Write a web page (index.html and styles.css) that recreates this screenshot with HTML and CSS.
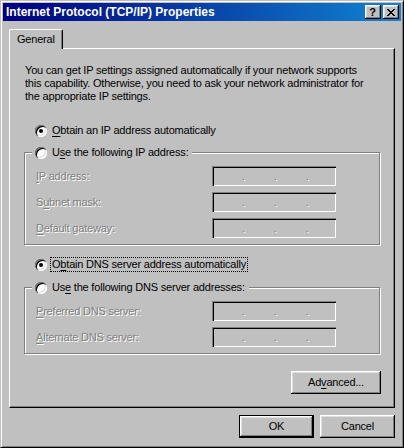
FILE: index.html
```html
<!DOCTYPE html>
<html lang="en">
<head>
    <meta charset="UTF-8">
    <title>Internet Protocol (TCP/IP) Properties</title>
    <link rel="stylesheet" href="styles.css">
</head>
<body>

<div class="window">
    <div class="titlebar">
        <span class="title">Internet Protocol (TCP/IP) Properties</span>
        <div class="caption-btns">
            <span class="cap-btn help">?</span>
            <span class="cap-btn close">
                <svg width="8" height="7" viewBox="0 0 8 7" shape-rendering="crispEdges">
                    <path d="M0 0h2v1H0z M6 0h2v1H6z M1 1h2v1H1z M5 1h2v1H5z M2 2h4v1H2z M3 3h2v1H3z M2 4h4v1H2z M1 5h2v1H1z M5 5h2v1H5z M0 6h2v1H0z M6 6h2v1H6z" fill="#000"/>
                </svg>
            </span>
        </div>
    </div>

    <div class="client">
        <div class="tabs">
            <div class="tab">General</div>
        </div>

        <div class="panel">
            <p class="intro">You can get IP settings assigned automatically if your network supports<br>this capability. Otherwise, you need to ask your network administrator for<br>the appropriate IP settings.</p>

            <div class="option">
                <span class="radio checked"></span>
                <span class="opt-label"><u>O</u>btain an IP address automatically</span>
            </div>

            <fieldset class="group">
                <legend>
                    <span class="radio"></span>
                    <span class="opt-label">U<u>s</u>e the following IP address:</span>
                </legend>
                <div class="fields">
                    <span class="disabled"><u>I</u>P address:</span>
                    <div class="ipbox"><span class="disabled">.</span><span class="disabled">.</span><span class="disabled">.</span></div>
                    <span class="disabled">S<u>u</u>bnet mask:</span>
                    <div class="ipbox"><span class="disabled">.</span><span class="disabled">.</span><span class="disabled">.</span></div>
                    <span class="disabled"><u>D</u>efault gateway:</span>
                    <div class="ipbox"><span class="disabled">.</span><span class="disabled">.</span><span class="disabled">.</span></div>
                </div>
            </fieldset>

            <div class="option option-dns">
                <span class="radio checked"></span>
                <span class="opt-label focused">O<u>b</u>tain DNS server address automatically</span>
            </div>

            <fieldset class="group">
                <legend>
                    <span class="radio"></span>
                    <span class="opt-label">Us<u>e</u> the following DNS server addresses:</span>
                </legend>
                <div class="fields">
                    <span class="disabled"><u>P</u>referred DNS server:</span>
                    <div class="ipbox"><span class="disabled">.</span><span class="disabled">.</span><span class="disabled">.</span></div>
                    <span class="disabled"><u>A</u>lternate DNS server:</span>
                    <div class="ipbox"><span class="disabled">.</span><span class="disabled">.</span><span class="disabled">.</span></div>
                </div>
            </fieldset>

            <div class="adv-row">
                <button class="btn btn-wide">Ad<u>v</u>anced...</button>
            </div>
        </div>

        <div class="dialog-btns">
            <button class="btn default">OK</button>
            <button class="btn">Cancel</button>
        </div>
    </div>
</div>

</body>
</html>
```

FILE: styles.css
```css
* {
    box-sizing: border-box;
}
body {
    margin: 0;
    background: #c0c0c0;
    font-family: "Liberation Sans", Arial, sans-serif;
    font-size: 11px;
    line-height: 13px;
    letter-spacing: -0.2px;
    color: #000;
}
u {
    text-decoration-thickness: 1px;
    text-underline-offset: 2px;
}

/* window frame */
.window {
    width: 404px;
    height: 448px;
    padding: 2px;
    background: #c0c0c0;
    border: 1px solid;
    border-color: #c0c0c0 #000 #000 #c0c0c0;
    box-shadow: inset 1px 1px #fff, inset -1px -1px #808080;
    display: flex;
    flex-direction: column;
}
.titlebar {
    flex: none;
    height: 18px;
    display: flex;
    align-items: center;
    justify-content: space-between;
    padding: 0 2px 0 3px;
    background: linear-gradient(to right, #000080, #1084d0);
    color: #fff;
    font-size: 12px;
    font-weight: bold;
    letter-spacing: 0;
}
.title {
    line-height: 18px;
}
.caption-btns {
    display: flex;
    gap: 2px;
}
.cap-btn {
    width: 16px;
    height: 14px;
    display: flex;
    align-items: center;
    justify-content: center;
    background: #c0c0c0;
    color: #000;
    font-size: 11px;
    line-height: 14px;
    box-shadow: inset -1px -1px #000, inset 1px 1px #fff, inset -2px -2px #808080, inset 2px 2px #dfdfdf;
}
.cap-btn.help {
    padding-right: 1px;
}

/* client area */
.client {
    flex: 1;
    display: flex;
    flex-direction: column;
    padding: 8px 6px 0;
}
.tabs {
    display: flex;
}
.tab {
    position: relative;
    z-index: 1;
    width: 54px;
    height: 20px;
    margin-bottom: -1px;
    padding: 3px 0 0 7px;
    background: #c0c0c0;
    border-left: 1px solid #fff;
    border-top: 1px solid #fff;
    border-right: 1px solid #000;
    border-radius: 2px 2px 0 0;
    box-shadow: inset -1px 0 #808080;
}
.panel {
    height: 360px;
    padding: 15px 14px 0;
    border: 1px solid;
    border-color: #fff #000 #000 #fff;
    box-shadow: inset -1px -1px #808080;
    display: flex;
    flex-direction: column;
}
.intro {
    margin: 0 0 0 1px;
}

/* radio options */
.option {
    display: flex;
    align-items: center;
    gap: 3px;
    margin: 20px 0 0 11px;
}
.option-dns {
    margin-top: 12px;
}
.radio {
    position: relative;
    flex: none;
    width: 12px;
    height: 12px;
    border-radius: 50%;
    background: #fff;
    box-shadow: inset 1px 1px #808080, inset 2px 2px #000, inset -1px -1px #fff, inset -2px -2px #dfdfdf;
}
.radio.checked::after {
    content: "";
    position: absolute;
    left: 4px;
    top: 4px;
    width: 4px;
    height: 4px;
    border-radius: 50%;
    background: #000;
}
.opt-label {
    padding: 0 1px;
    border: 1px solid transparent;
    white-space: nowrap;
}
.opt-label.focused {
    border: 1px dotted #000;
}

/* group boxes */
.group {
    margin: 7px 0 0;
    padding: 0 0 6px;
    min-width: 0;
    border: 1px solid #808080;
    box-shadow: 1px 1px #fff, inset 1px 1px #fff;
}
.group legend {
    display: flex;
    align-items: center;
    gap: 3px;
    margin-left: 7px;
    padding: 0 2px 0 3px;
    background: #c0c0c0;
}
.option-dns + .group {
    margin-top: 8px;
}
.fields {
    display: grid;
    grid-template-columns: 176px 124px;
    row-gap: 6px;
    align-items: center;
    margin: 6px 0 0 11px;
}
.disabled {
    color: #808080;
    text-shadow: 1px 1px #fff;
}
.ipbox {
    height: 20px;
    display: flex;
    align-items: center;
    gap: 29px;
    padding-left: 30px;
    background: #c0c0c0;
    box-shadow: inset 1px 1px #808080, inset 2px 2px #000, inset -1px -1px #fff;
}

/* buttons */
.btn {
    width: 75px;
    height: 23px;
    padding: 0;
    border: 0;
    background: #c0c0c0;
    font: inherit;
    letter-spacing: inherit;
    color: #000;
    box-shadow: inset -1px -1px #000, inset 1px 1px #fff, inset -2px -2px #808080, inset 2px 2px #dfdfdf;
}
.btn.default {
    border: 1px solid #000;
}
.btn-wide {
    width: 90px;
    margin-right: -1px;
}
.adv-row {
    display: flex;
    justify-content: flex-end;
    margin-top: 17px;
}
.dialog-btns {
    display: flex;
    justify-content: flex-end;
    gap: 6px;
    margin-top: 7px;
}
```
